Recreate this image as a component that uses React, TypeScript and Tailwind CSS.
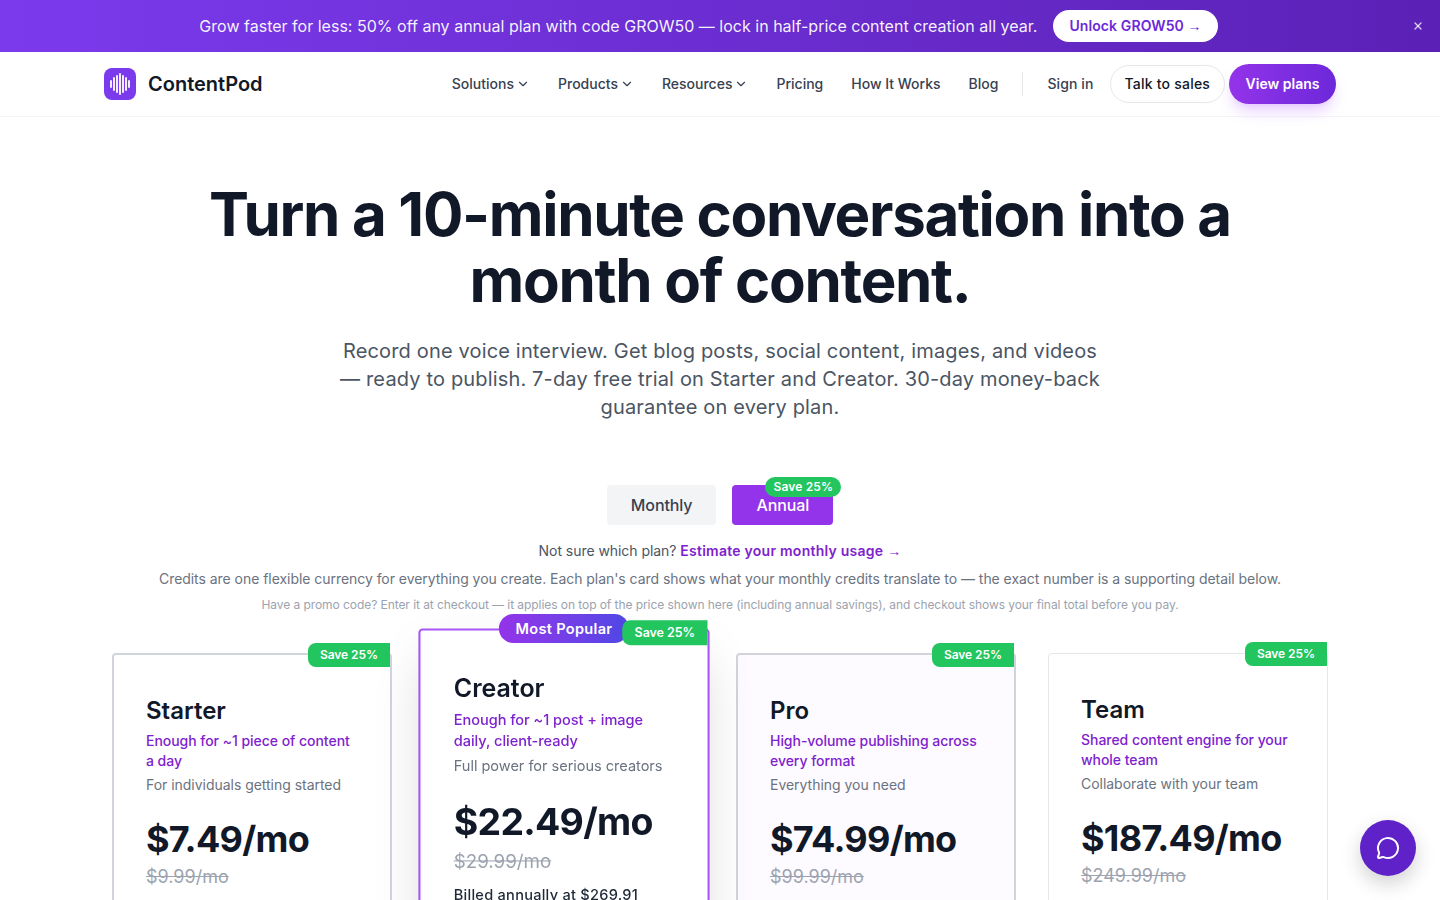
import { ChevronDown, MessageCircle, X } from "lucide-react";

const nav = [
  { label: "Solutions", menu: true },
  { label: "Products", menu: true },
  { label: "Resources", menu: true },
  { label: "Pricing" },
  { label: "How It Works" },
  { label: "Blog" },
];

const plans = [
  { name: "Starter", sub: "Enough for ~1 piece of content a day", desc: "For individuals getting started", price: "$7.49/mo", old: "$9.99/mo", bill: "Billed annually at $89.91", card: "border-2 border-[#d1d5db] bg-white" },
  { name: "Creator", sub: "Enough for ~1 post + image daily, client-ready", desc: "Full power for serious creators", price: "$22.49/mo", old: "$29.99/mo", bill: "Billed annually at $269.91", card: "border-2 border-[#a855f7] bg-white scale-[1.04] shadow-[0_20px_50px_-10px_rgba(0,0,0,0.18)] z-10", popular: true },
  { name: "Pro", sub: "High-volume publishing across every format", desc: "Everything you need", price: "$74.99/mo", old: "$99.99/mo", bill: "Billed annually at $899.91", card: "border-2 border-[#d1d5db] bg-[#fdfbff]" },
  { name: "Team", sub: "Shared content engine for your whole team", desc: "Collaborate with your team", price: "$187.49/mo", old: "$249.99/mo", bill: "Billed annually at $2,249.91", card: "border border-[#e5e7eb] bg-white" },
];

function Arrow() {
  return <span className="font-['Liberation_Sans',sans-serif] text-[14px] font-normal">→</span>;
}

function Logo() {
  const bars = [8, 14, 18, 22, 18, 14, 8];
  return (
    <div className="flex h-8 w-8 items-center justify-center gap-[1.5px] rounded-lg bg-[#7c3aed]">
      {bars.map((h, i) => (
        <span key={i} className="w-[1.5px] rounded-full bg-white/90" style={{ height: h }} />
      ))}
    </div>
  );
}

export default function App() {
  return (
    <div className="relative h-screen overflow-hidden bg-white font-['Inter',sans-serif] text-[#111827]">
      <div className="flex h-[52px] items-center justify-center gap-4 bg-gradient-to-r from-[#7c3aed] to-[#5b21b6] pr-[23px] text-white">
        <p className="text-base font-normal tracking-[0.01px] text-white/95">Grow faster for less: 50% off any annual plan with code GROW50 — lock in half-price content creation all year.</p>
        <a className="rounded-full bg-white px-4 py-1.5 text-sm font-semibold tracking-[0.1px] text-[#6d28d9]">Unlock GROW50 <Arrow /></a>
        <X className="absolute right-[16px] top-[20px] h-3 w-3 text-white/80" strokeWidth={2.5} />
      </div>

      <header className="border-b border-[#f3f4f6] bg-white">
        <div className="mx-auto flex h-16 max-w-7xl items-center justify-between px-6">
          <div className="flex items-center gap-3">
            <Logo />
            <span className="text-xl font-semibold text-[#111827]">ContentPod</span>
          </div>
          <nav className="flex items-center">
            <div className="flex items-center gap-7">
              {nav.map((n) => (
                <a key={n.label} className="flex items-center gap-0.5 text-sm font-medium text-[#374151]">
                  {n.label}
                  {n.menu && <ChevronDown className="h-3.5 w-3.5 text-[#374151]" />}
                </a>
              ))}
            </div>
            <div className="mx-6 h-6 w-px bg-[#e5e7eb]" />
            <a className="text-sm font-medium tracking-[0.1px] text-[#374151]">Sign in</a>
            <a className="ml-4 rounded-full border border-[#e5e7eb] px-[14px] py-[8px] text-sm font-medium tracking-[0.22px] text-[#111827]">Talk to sales</a>
            <a className="ml-1 rounded-full bg-gradient-to-r from-[#9333ea] to-[#6d28d9] px-[16.5px] py-[10px] text-sm font-semibold text-white shadow-lg shadow-purple-300/60">View plans</a>
          </nav>
        </div>
      </header>

      <main>
        <section className="mx-auto max-w-5xl pt-[64px] text-center">
          <h1 className="text-[60px] font-bold leading-[66px] tracking-[-1.32px] text-[#111827]">Turn a 10-minute conversation into a month of content.</h1>
          <p className="mx-auto mt-6 max-w-3xl text-xl leading-7 tracking-[0.16px] text-[#4b5563]">Record one voice interview. Get blog posts, social content, images, and videos — ready to publish. 7-day free trial on Starter and Creator. 30-day money-back guarantee on every plan.</p>
        </section>

        <div className="mt-[64px] flex justify-center gap-4">
          <button className="rounded bg-[#f3f4f6] px-6 py-2 text-base font-medium tracking-[-0.1px] text-[#374151]">Monthly</button>
          <button className="relative rounded bg-[#9333ea] px-6 py-2 text-base font-medium tracking-[-0.1px] text-white">
            Annual
            <span className="absolute -right-2 -top-2 rounded-full bg-[#22c55e] px-2 py-0.5 text-xs font-semibold tracking-[0.15px] text-white">Save 25%</span>
          </button>
        </div>

        <p className="mt-4 text-center text-sm tracking-[-0.05px] text-[#4b5563]">Not sure which plan? <a className="font-semibold tracking-[0.25px] text-[#7e22ce]">Estimate your monthly usage <Arrow /></a></p>
        <p className="mt-2 text-center text-sm tracking-[-0.045px] text-[#6b7280]">Credits are one flexible currency for everything you create. Each plan's card shows what your monthly credits translate to — the exact number is a supporting detail below.</p>
        <p className="mt-2 text-center text-xs tracking-[-0.065px] text-[#9ca3af]">Have a promo code? Enter it at checkout — it applies on top of the price shown here (including annual savings), and checkout shows your final total before you pay.</p>

        <section className="mx-auto mt-10 grid max-w-7xl grid-cols-4 gap-8 px-8">
          {plans.map((p) => (
            <div key={p.name} className={`relative rounded px-8 pt-10 ${p.popular ? "h-[1225px]" : "h-[1000px]"} ${p.card}`}>
              {p.popular && (
                <span className="absolute -top-4 left-1/2 -translate-x-1/2 rounded-full bg-gradient-to-r from-[#9333ea] to-[#4f46e5] px-4 py-1 text-sm font-semibold tracking-[0.3px] text-white">Most Popular</span>
              )}
              <span className={`absolute right-0 rounded-l-lg bg-[#22c55e] px-3 py-1 text-xs font-semibold tracking-[-0.05px] text-white ${p.popular ? "-top-[10px]" : "-top-3"}`}>Save 25%</span>
              <h3 className="text-2xl font-semibold text-[#111827]">{p.name}</h3>
              <p className="mt-1 text-sm font-medium leading-5 tracking-[-0.04px] text-[#7e22ce]">{p.sub}</p>
              <p className="mt-1 text-sm tracking-[-0.03px] text-[#6b7280]">{p.desc}</p>
              <div className="mt-6 text-4xl font-bold tracking-[-0.7px] text-[#111827]">{p.price}</div>
              <div className="mt-1 text-lg text-[#9ca3af] line-through">{p.old}</div>
              <p className={`text-sm font-medium tracking-[0.25px] text-[#1f2937] ${p.popular ? "mt-2" : "mt-4"}`}>{p.bill}</p>
            </div>
          ))}
        </section>
      </main>

      <button className="absolute bottom-6 right-6 flex h-14 w-14 items-center justify-center rounded-full bg-[#5f22c9] text-white shadow-[0_8px_20px_rgba(0,0,0,0.18)]">
        <MessageCircle className="h-6 w-6" />
      </button>
    </div>
  );
}
